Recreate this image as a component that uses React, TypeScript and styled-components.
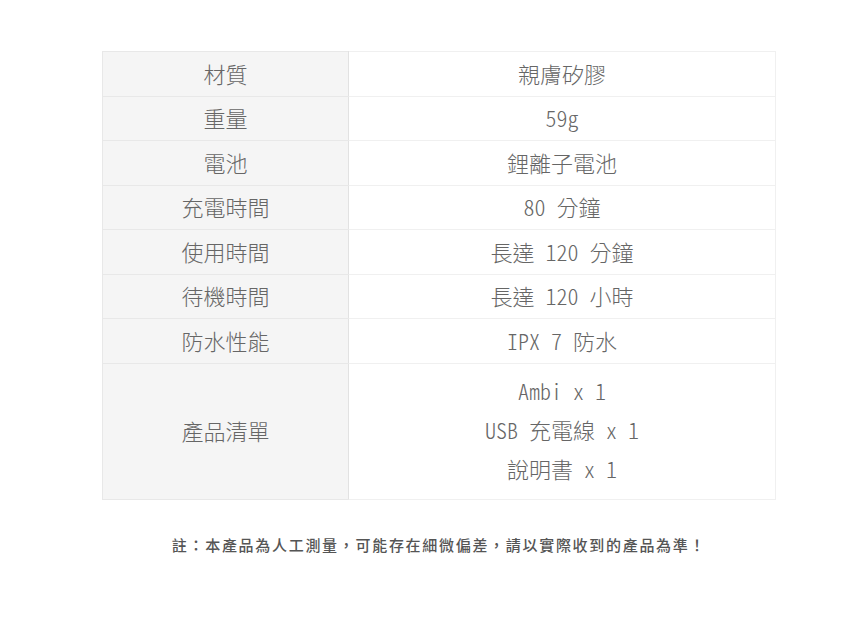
import React, { ReactElement } from "react";
import styled, { createGlobalStyle } from "styled-components";

interface ISpec {
  label: string;
  values: string[];
}

const specs: ISpec[] = [
  { label: "材質", values: ["親膚矽膠"] },
  { label: "重量", values: ["59g"] },
  { label: "電池", values: ["鋰離子電池"] },
  { label: "充電時間", values: ["80 分鐘"] },
  { label: "使用時間", values: ["長達 120 分鐘"] },
  { label: "待機時間", values: ["長達 120 小時"] },
  { label: "防水性能", values: ["IPX 7 防水"] },
  { label: "產品清單", values: ["Ambi x 1", "USB 充電線 x 1", "說明書 x 1"] },
];

const GlobalStyle = createGlobalStyle`
  body {
    margin: 0;
    background: #ffffff;
    font-family: "Noto Sans CJK TC", "Noto Sans", sans-serif;
  }
`;

const Page = styled.div`
  padding: 51px 0 0 102px;
  width: 674px;
`;

const Table = styled.table`
  width: 674px;
  border-collapse: collapse;
  table-layout: fixed;
`;

const LabelCell = styled.td`
  width: 245px;
  height: 41.5px;
  padding: 0 0 2px;
  background: #f5f5f5;
  border: 1px solid #e8e8e8;
  border-right-color: #e2e2e2;
  text-align: center;
  color: #666;
  font-size: 22px;
  font-weight: 300;
  line-height: 1;
`;

const ValueCell = styled.td<{ multi: boolean }>`
  height: 41.5px;
  padding: ${(props) => (props.multi ? "7px 0 11px" : "0 0 2px")};
  border: 1px solid #f0f0f0;
  text-align: center;
  color: #666;
  font-size: 22px;
  font-weight: 300;
  font-feature-settings: "hwid" 1;
  line-height: ${(props) => (props.multi ? "39px" : "1")};
`;

const Note = styled.p`
  margin: 34px 0 0;
  text-align: center;
  color: #555;
  font-size: 15px;
  font-weight: 500;
  letter-spacing: 1.7px;
`;

const App = (): ReactElement => {
  return (
    <>
      <GlobalStyle />
      <Page>
        <Table>
          <tbody>
            {specs.map((spec) => (
              <tr key={spec.label}>
                <LabelCell>{spec.label}</LabelCell>
                <ValueCell multi={spec.values.length > 1}>
                  {spec.values.map((value) => (
                    <div key={value}>{value}</div>
                  ))}
                </ValueCell>
              </tr>
            ))}
          </tbody>
        </Table>
        <Note>註：本產品為人工測量，可能存在細微偏差，請以實際收到的產品為準！</Note>
      </Page>
    </>
  );
};

export default App;
